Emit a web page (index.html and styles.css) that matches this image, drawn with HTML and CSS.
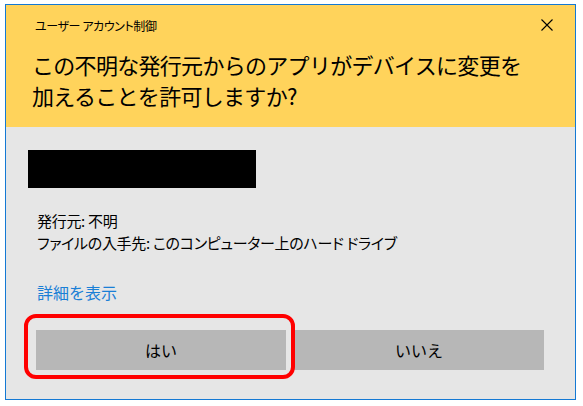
FILE: index.html
```html
<!DOCTYPE html>
<html lang="ja">
<head>
    <meta charset="UTF-8">
    <title>ユーザー アカウント制御</title>
    <link rel="stylesheet" href="styles.css">
</head>
<body>
    <div class="window">
        <div class="header">
            <div class="titlebar">
                <span class="title">ユーザー アカウント制御</span>
                <svg class="close" width="12" height="12" viewBox="0 0 12 12">
                    <path d="M0.5 0.5 L11.5 11.5 M11.5 0.5 L0.5 11.5" stroke="#000" stroke-width="1.1" fill="none"/>
                </svg>
            </div>
            <h1 class="question">この不明な発行元からのアプリがデバイスに変更を<br>加えることを許可しますか?</h1>
        </div>
        <div class="content">
            <div class="redacted"></div>
            <div class="info">
                <div>発行元: 不明</div>
                <div>ファイルの入手先: このコンピューター上のハード ドライブ</div>
            </div>
            <a class="details" href="#">詳細を表示</a>
            <div class="actions">
                <button class="btn">はい</button>
                <button class="btn">いいえ</button>
                <div class="highlight"></div>
            </div>
        </div>
    </div>
</body>
</html>
```

FILE: styles.css
```css
body {
    margin: 0;
    background: #fff;
    font-family: "Noto Sans CJK JP", "Noto Sans", sans-serif;
    color: #000;
}
.window {
    margin: 4px 0 0 5px;
    width: 569px;
    height: 394px;
    border: 1px solid #1479d4;
    background: #e6e6e6;
    display: flex;
    flex-direction: column;
}
.header {
    background: #ffd35b;
    height: 122px;
    padding: 0 22px 0 28px;
    box-sizing: border-box;
}
.titlebar {
    height: 40px;
    display: flex;
    align-items: center;
    justify-content: space-between;
}
.title {
    margin-left: 1px;
    font-size: 12px;
    letter-spacing: -0.4px;
    font-feature-settings: "palt";
}
.close {
    display: block;
}
.question {
    margin: 4px 0 0 -2px;
    font-size: 22px;
    font-weight: normal;
    line-height: 31px;
    letter-spacing: -0.7px;
}
.content {
    padding: 23px 30px 0 31px;
    display: flex;
    flex-direction: column;
    align-items: flex-start;
}
.redacted {
    margin-left: -9px;
    width: 228px;
    height: 38px;
    background: #000;
}
.info {
    margin-top: 22px;
    font-size: 15px;
    line-height: 22px;
    letter-spacing: -0.3px;
    font-feature-settings: "palt";
}
.details {
    margin-top: 27px;
    font-size: 16px;
    line-height: 22px;
    color: #1a7fd6;
    text-decoration: none;
}
.actions {
    position: relative;
    margin: 27px 0 0 -1px;
    display: flex;
    gap: 8px;
}
.btn {
    width: 250px;
    height: 40px;
    border: none;
    background: #b7b7b7;
    font-family: inherit;
    font-size: 16px;
    color: #000;
    padding: 0;
}
.highlight {
    position: absolute;
    left: -12px;
    top: -16px;
    width: 271px;
    height: 65px;
    box-sizing: border-box;
    border: 4px solid #ff0000;
    border-radius: 12px;
}
```
